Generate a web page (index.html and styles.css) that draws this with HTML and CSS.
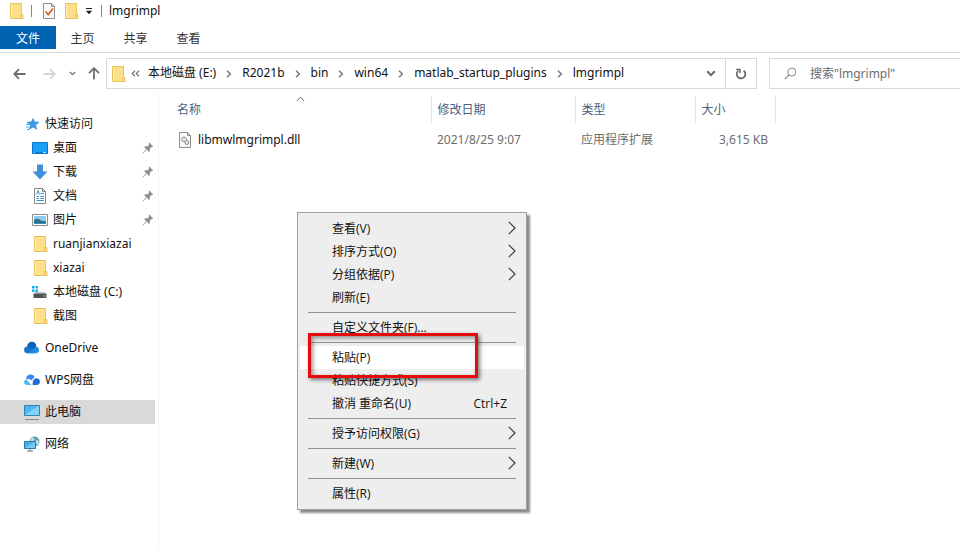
FILE: index.html
```html
<!DOCTYPE html>
<html lang="zh">
<head>
  <meta charset="UTF-8">
  <meta name="viewport" content="width=device-width, initial-scale=1.0">
  <title>lmgrimpl</title>
  <link rel="stylesheet" href="styles.css">
</head>
<body>
  <!-- 公用图标 -->
  <svg class="sprite" aria-hidden="true">
    <symbol id="folder" viewBox="0 0 16 16">
      <path d="M2.500.5h11v11h1.500v4H2.500z" fill="#ffe08a" stroke="#e8c35c"/>
      <path d="M12.500 11v4.500" stroke="#e8c35c"/>
      <path d="M3.500 1.500v13" stroke="#ffedb5"/>
    </symbol>
    <symbol id="chevron" viewBox="0 0 6 8">
      <path d="M1 .8 4.300 4 1 7.200" fill="none" stroke="#777" stroke-width="1.500"/>
    </symbol>
    <symbol id="down" viewBox="0 0 10 7">
      <path d="M1.200 1.300 5 5.100l3.800-3.800" fill="none" stroke="currentColor" stroke-width="2"/>
    </symbol>
    <symbol id="arrow" viewBox="0 0 8 14">
      <path d="M.8.8 7 7 .8 13.200" fill="none" stroke="#333" stroke-width="1.100"/>
    </symbol>
    <symbol id="pin" viewBox="0 0 12 12">
      <path d="m7.300.6 4 4-1.200.5-.4-.2-2 2c.4 1.300.1 2.300-.7 3L4.800 7.700 1 11.300l-.6.2.2-.7L4.300 7.200 2.100 5c.8-.8 1.800-1 3-.6l2-2-.3-.6z" fill="#8b9097"/>
    </symbol>
  </svg>

  <header class="title-bar">
    <svg class="icon"><use href="#folder"/></svg>
    <span class="divider"></span>
    <button class="tool-button" aria-label="属性">
      <svg class="icon" viewBox="0 0 16 16"><path d="M2.500.5h8l3 3v12h-11z" fill="#fafafa" stroke="#8d8d8d"/><path d="M10.500.5v3h3" fill="none" stroke="#8d8d8d"/><path d="m4.500 8.500 2.700 3 4.800-6" fill="none" stroke="#e2622d" stroke-width="1.800"/></svg>
    </button>
    <button class="tool-button" aria-label="新建文件夹">
      <svg class="icon"><use href="#folder"/></svg>
    </button>
    <button class="tool-button small" aria-label="自定义快速访问工具栏">
      <svg class="tool-caret" viewBox="0 0 8 7"><path d="M1 .5h6" stroke="#222"/><path d="M.8 2.800h6.400L4 6.200z" fill="#222"/></svg>
    </button>
    <span class="divider"></span>
    <h1 class="title">lmgrimpl</h1>
  </header>

  <nav class="tabs">
    <button class="tab active">文件</button>
    <button class="tab">主页</button>
    <button class="tab">共享</button>
    <button class="tab">查看</button>
  </nav>

  <div class="address-row">
    <div class="history">
      <button aria-label="后退"><svg width="13" height="12" viewBox="0 0 13 12"><path d="M12.500 6H1.500M6 1.200 1.300 6 6 10.800" fill="none" stroke="#6d6d6d" stroke-width="1.800"/></svg></button>
      <button class="forward" aria-label="前进"><svg width="13" height="12" viewBox="0 0 13 12"><path d="M.5 6h11M7 1.200 11.700 6 7 10.800" fill="none" stroke="#d4d4d4" stroke-width="1.800"/></svg></button>
      <button class="recent" aria-label="最近位置"><svg width="7" height="5" viewBox="0 0 10 7"><use href="#down"/></svg></button>
      <button aria-label="上移"><svg width="12" height="13" viewBox="0 0 12 13"><path d="M6 12.500v-11M1 6.200 6 1.200l5 5" fill="none" stroke="#6d6d6d" stroke-width="1.800"/></svg></button>
    </div>
    <div class="address-box">
      <svg class="icon"><use href="#folder"/></svg>
      <button class="more" aria-label="更多"><svg width="9" height="7" viewBox="0 0 9 7"><path d="M4 .8 1.200 3.500 4 6.200M8 .8 5.200 3.500 8 6.200" fill="none" stroke="#777" stroke-width="1.200"/></svg></button>
      <button class="crumb">本地磁盘 (E:)</button>
      <svg class="chevron"><use href="#chevron"/></svg>
      <button class="crumb">R2021b</button>
      <svg class="chevron"><use href="#chevron"/></svg>
      <button class="crumb">bin</button>
      <svg class="chevron"><use href="#chevron"/></svg>
      <button class="crumb">win64</button>
      <svg class="chevron"><use href="#chevron"/></svg>
      <button class="crumb">matlab_startup_plugins</button>
      <svg class="chevron"><use href="#chevron"/></svg>
      <button class="crumb">lmgrimpl</button>
      <button class="drop" aria-label="历史记录"><svg width="10" height="7"><use href="#down"/></svg></button>
      <button class="refresh" aria-label="刷新"><svg width="12" height="12" viewBox="0 0 12 12"><path d="M8.600 2.700A4.300 4.300 0 1 1 3.200 2.900" fill="none" stroke="#666" stroke-width="1.700"/><path d="M1.200 1.400h3.700v3.700" fill="none" stroke="#666" stroke-width="1.500"/></svg></button>
    </div>
    <div class="search-box">
      <svg width="13" height="13" viewBox="0 0 13 13"><circle cx="7.800" cy="5" r="4" fill="none" stroke="#888"/><path d="M5 8 .8 12.200" stroke="#888" stroke-width="1.200"/></svg>
      <input type="search" aria-label="搜索" placeholder="搜索&quot;lmgrimpl&quot;">
    </div>
  </div>

  <div class="content">
    <aside class="sidebar">
      <a href="#" class="item">
        <svg class="icon" viewBox="0 0 16 16"><path d="m9.200 2.500 1.300 3.500 4.500.2-3.500 2.900 1.100 4.200L9 11l-3.700 2.300 1.200-4.100L3 6.200l4.400-.2z" fill="#3a9be6" stroke="#2180cc" stroke-width=".6"/><path d="M2 8.500h3M2 11h3M3 13.500h2" stroke="#55aaea"/></svg>
        快速访问
      </a>
      <a href="#" class="item child">
        <svg class="icon" viewBox="0 0 16 16"><path d="M.5 2.500h15v11H.5z" fill="#18a0f5" stroke="#0878cf"/><path d="M1 12.500h14" stroke="#0878cf"/><path d="M2 12.500h1m8 0h3" stroke="#bde5ff"/></svg>
        桌面
        <svg class="pin"><use href="#pin"/></svg>
      </a>
      <a href="#" class="item child">
        <svg class="icon" viewBox="0 0 16 16"><path d="M5 .5h6v7h4.500L8 15.500.5 7.500H5z" fill="#3d8fdc"/></svg>
        下载
        <svg class="pin"><use href="#pin"/></svg>
      </a>
      <a href="#" class="item child">
        <svg class="icon" viewBox="0 0 16 16"><path d="M2.500.5h8l3 3v12h-11z" fill="#fff" stroke="#858585"/><path d="M10.500.5v3h3" fill="none" stroke="#858585"/><path d="m4.500 6.500 1.500-4 1.500 4M8.500 5.500H12M4.500 8.500H7M8.500 8.500H12M4.500 10.500H7M8.500 10.500H12M4.500 12.500H12" fill="none" stroke="#3292cf"/></svg>
        文档
        <svg class="pin"><use href="#pin"/></svg>
      </a>
      <a href="#" class="item child">
        <svg class="icon" viewBox="0 0 16 16"><path d="M.5 2.500h15v11H.5z" fill="#fff" stroke="#8d8d8d"/><path d="M2 4h12v8H2z" fill="#8cc9f0"/><path d="M2 8c3-2.500 5-.5 7 .5s4 .5 5 .5v3H2z" fill="#356f83"/><path d="M2 11h12v1H2z" fill="#2c8ac5"/></svg>
        图片
        <svg class="pin"><use href="#pin"/></svg>
      </a>
      <a href="#" class="item child"><svg class="icon"><use href="#folder"/></svg>ruanjianxiazai</a>
      <a href="#" class="item child"><svg class="icon"><use href="#folder"/></svg>xiazai</a>
      <a href="#" class="item child">
        <svg class="icon" viewBox="0 0 16 16"><path d="M0 2h2.500v2.500H0zM3.500 2H6v2.500H3.500zM0 5.500h2.500V8H0zM3.500 5.500H6V8H3.500z" fill="#12b0e8"/><path d="m2 9.500 1.500-1.500h9L14 9.500z" fill="#b8bcc0"/><path d="M1.500 9.500h13v4.500h-13z" fill="#4d5358"/><path d="M11.500 12h2" stroke="#8fe08f"/></svg>
        本地磁盘 (C:)
      </a>
      <a href="#" class="item child"><svg class="icon"><use href="#folder"/></svg>截图</a>
      <a href="#" class="item root">
        <svg class="icon" viewBox="0 0 16 16"><path d="M3.200 6.800A4.600 4.600 0 0 1 12.400 6l-3 4z" fill="#0a60b8"/><path d="M3.400 13.200a3.400 3.400 0 0 1 .2-6.800c1 0 1.800.3 2.600.9l5 3.400-1 2.500z" fill="#1274d0"/><path d="M3.500 13.200 9 9.300 12.300 6.500a3.500 3.500 0 0 1 .5 6.700z" fill="#1c8fe2"/></svg>
        OneDrive
      </a>
      <a href="#" class="item root">
        <svg class="icon" viewBox="0 0 16 16"><path d="M3.200 13C-.8 12.800-.8 8 2.600 7.500L7.500 13z" fill="#53b5f7"/><path d="M2.200 7.200C1.800 1.500 9.300 1 10.800 5.300L8 8.700 5.500 7z" fill="#3d87ee"/><path d="M9 9.300c1-2.300 2.200-3.300 3.800-3 4.300.8 4.100 6.700-.3 6.700H8.300z" fill="#2368d8"/><path d="M3.300 8c2 .2 3.400 2.200 5.200 4.800M7 10.300C8 8 9 6.300 10.800 5.500" fill="none" stroke="#fff" stroke-width=".8"/></svg>
        WPS网盘
      </a>
      <a href="#" class="item root selected">
        <svg class="icon" viewBox="0 0 16 16"><path d="M.5 1.500h15v10H.5z" fill="#4bb9f1" stroke="#3780a6"/><path d="m1 11 13-9h1v9z" fill="#82d3f8"/><path d="M1 15.500h14" stroke="#7891a1"/></svg>
        此电脑
      </a>
      <a href="#" class="item root">
        <svg class="icon" viewBox="0 0 16 16"><circle cx="10.500" cy="5.500" r="5" fill="#5d9cbd"/><path d="M8 1.500c2 0 3 1 2 2.500S7 6 6.500 4zM12 4l3 1-1 4-3-2z" fill="#c9e4e9"/><path d="M.5 5.500h11v7H.5z" fill="#42aeea" stroke="#2e7ba7"/><path d="m1 12 9-6h1v6z" fill="#79cbf2"/><path d="M3 15h6M6 13v2" stroke="#548298"/></svg>
        网络
      </a>
    </aside>

    <main class="files">
      <table class="file-table">
        <thead>
          <tr>
            <th class="col-name">名称<svg class="sort" viewBox="0 0 9 6"><path d="M.8 5 4.500 1.200 8.200 5" fill="none" stroke="#666"/></svg></th>
            <th class="col-date">修改日期</th>
            <th class="col-type">类型</th>
            <th class="col-size">大小</th>
            <th></th>
          </tr>
        </thead>
        <tbody>
          <tr>
            <td class="col-name">
              <div class="file-name">
                <svg class="icon" viewBox="0 0 16 16"><path d="M2.500.5h8l3 3v12h-11z" fill="#fafafa" stroke="#8d8d8d"/><path d="M10.500.5v3h3" fill="none" stroke="#8d8d8d"/><circle cx="7" cy="7.500" r="2.500" fill="none" stroke="#8b9299"/><circle cx="7" cy="7.500" r=".8" fill="#8b9299"/><circle cx="9.800" cy="10.500" r="2" fill="#dfe3e6" stroke="#8b9299"/></svg>
                libmwlmgrimpl.dll
              </div>
            </td>
            <td>2021/8/25 9:07</td>
            <td>应用程序扩展</td>
            <td class="size">3,615 KB</td>
            <td></td>
          </tr>
        </tbody>
      </table>
    </main>
  </div>

  <!-- 右键菜单 -->
  <div class="context-menu" role="menu">
    <button class="menu-item" role="menuitem">查看(V)<svg class="arrow"><use href="#arrow"/></svg></button>
    <button class="menu-item" role="menuitem">排序方式(O)<svg class="arrow"><use href="#arrow"/></svg></button>
    <button class="menu-item" role="menuitem">分组依据(P)<svg class="arrow"><use href="#arrow"/></svg></button>
    <button class="menu-item" role="menuitem">刷新(E)</button>
    <hr>
    <button class="menu-item" role="menuitem">自定义文件夹(F)...</button>
    <hr>
    <button class="menu-item hover" role="menuitem">粘贴(P)<span class="highlight"></span></button>
    <button class="menu-item" role="menuitem">粘贴快捷方式(S)</button>
    <button class="menu-item" role="menuitem">撤消 重命名(U)<span class="shortcut">Ctrl+Z</span></button>
    <hr>
    <button class="menu-item" role="menuitem">授予访问权限(G)<svg class="arrow"><use href="#arrow"/></svg></button>
    <hr>
    <button class="menu-item" role="menuitem">新建(W)<svg class="arrow"><use href="#arrow"/></svg></button>
    <hr>
    <button class="menu-item" role="menuitem">属性(R)</button>
  </div>
</body>
</html>
```
FILE: styles.css
```css
* {
  box-sizing: border-box;
}
body {
  margin: 0;
  min-height: 100vh;
  display: flex;
  flex-direction: column;
  overflow: hidden;
  background-color: #fff;
  color: #111;
  font-family: "Noto Sans", "Noto Sans CJK SC", sans-serif;
  font-size: 12px;
  line-height: 16px;
}
button {
  margin: 0;
  padding: 0;
  border: none;
  background: none;
  color: inherit;
  font: inherit;
}
svg {
  display: block;
  flex: none;
}
.sprite {
  position: absolute;
  width: 0;
  height: 0;
}
.icon {
  width: 16px;
  height: 16px;
}

/* 标题栏 */
.title-bar {
  display: flex;
  align-items: center;
  height: 26px;
  padding: 0 8px 4px;
}
.divider {
  width: 1px;
  height: 12px;
  margin-left: 7px;
  background-color: #888;
}
.tool-button {
  margin-left: 9px;
}
.tool-button + .tool-button {
  margin-left: 6px;
}
.tool-button.small {
  padding-right: 1px;
}
.tool-caret {
  width: 8px;
  height: 7px;
}
.title {
  margin: 0 0 0 7px;
  font-size: 12px;
  font-weight: normal;
}

/* 选项卡 */
.tabs {
  display: flex;
  height: 27px;
  padding-bottom: 3px;
  border-bottom: 1px solid #dadbdc;
}
.tab {
  width: 53px;
  padding-top: 2px;
  color: #333;
}
.tab.active {
  width: 56px;
  background-color: #0063b1;
  color: #fff;
}

/* 地址栏 */
.address-row {
  display: flex;
  height: 41px;
  padding: 5px 0 5px 13px;
}
.history {
  display: flex;
  align-items: center;
  width: 93px;
  color: #777;
}
.forward {
  margin-left: 17px;
}
.recent {
  margin: 0 12px 0 13px;
}
.address-box {
  flex: 1;
  display: flex;
  align-items: center;
  border: 1px solid #d9d9d9;
  padding-left: 3px;
}
.more {
  margin: 0 8px 0 5px;
}
.crumb {
  padding-bottom: 1px;
  white-space: nowrap;
}
.chevron {
  width: 6px;
  height: 8px;
  margin: 0 10px;
}
.drop {
  margin-left: auto;
  padding: 0 9px;
  color: #666;
}
.refresh {
  display: flex;
  align-items: center;
  justify-content: center;
  align-self: stretch;
  width: 31px;
  border-left: 1px solid #d9d9d9;
}
.search-box {
  display: flex;
  align-items: center;
  gap: 13px;
  flex: none;
  width: 191px;
  margin-left: 12px;
  padding-left: 14px;
  border: 1px solid #d9d9d9;
  border-right: none;
}
.search-box input {
  flex: 1;
  min-width: 0;
  padding: 0;
  border: none;
  outline: none;
  background: none;
  font: inherit;
}
.search-box input::placeholder {
  color: #6d6d6d;
}

/* 主体 */
.content {
  flex: 1;
  display: flex;
}
.sidebar {
  flex: none;
  width: 159px;
  padding: 18px 3px 0 0;
  border-right: 1px solid #f2f2f2;
}
.item {
  display: flex;
  align-items: center;
  gap: 5px;
  height: 24px;
  padding-left: 24px;
  color: #111;
  text-decoration: none;
}
.item.child {
  padding-left: 32px;
}
.item.root {
  margin-top: 8px;
}
.item.selected {
  background-color: #d9d9d9;
}
.pin {
  width: 12px;
  height: 12px;
  margin-left: auto;
  margin-right: 1px;
}

/* 文件列表 */
.files {
  flex: 1;
  padding-top: 2px;
}
.file-table {
  width: 100%;
  table-layout: fixed;
  border-collapse: collapse;
}
.file-table th {
  height: 28px;
  padding: 0 0 0 6px;
  border-right: 1px solid #e5e5e5;
  color: #4c607a;
  font-weight: normal;
  text-align: left;
}
.file-table th:last-child {
  border-right: none;
}
.file-table td {
  height: 32px;
  padding: 0 0 0 6px;
  color: #6d6d6d;
}
.file-table .col-name {
  position: relative;
  width: 272px;
  padding-left: 18px;
  color: #4c607a;
}
.col-date {
  width: 144px;
}
.col-type {
  width: 120px;
}
.col-size {
  width: 80px;
}
.sort {
  position: absolute;
  top: 0;
  right: 126px;
  width: 9px;
  height: 6px;
}
.file-name {
  display: flex;
  align-items: center;
  gap: 5px;
  color: #111;
}
.file-table .size {
  padding-right: 7px;
  text-align: right;
}

/* 右键菜单 */
.context-menu {
  position: absolute;
  top: 212px;
  left: 297px;
  width: 230px;
  padding: 4px 2px;
  border: 1px solid #a0a0a0;
  background-color: #eee;
  box-shadow: 3px 3px 2px rgba(0, 0, 0, 0.45);
  font-family: "Open Sans", "Noto Sans CJK SC", sans-serif;
}
.context-menu hr {
  height: 1px;
  margin: 3px 8px;
  border: none;
  background-color: #919191;
}
.menu-item {
  position: relative;
  display: flex;
  align-items: center;
  width: 100%;
  height: 23px;
  padding: 0 8px 0 32px;
  text-align: left;
}
.menu-item.hover {
  background-color: #fff;
}
.arrow {
  width: 8px;
  height: 14px;
  margin: 0 0 2px auto;
}
.shortcut {
  margin-left: auto;
  padding-right: 9px;
}
.highlight {
  position: absolute;
  z-index: 1;
  top: -13px;
  left: 8px;
  width: 170px;
  height: 45px;
  border: 3px solid #e60c0c;
  box-shadow: 2px 2px 4px rgba(0, 0, 0, 0.5), inset 2px 2px 4px rgba(0, 0, 0, 0.4);
}
```
